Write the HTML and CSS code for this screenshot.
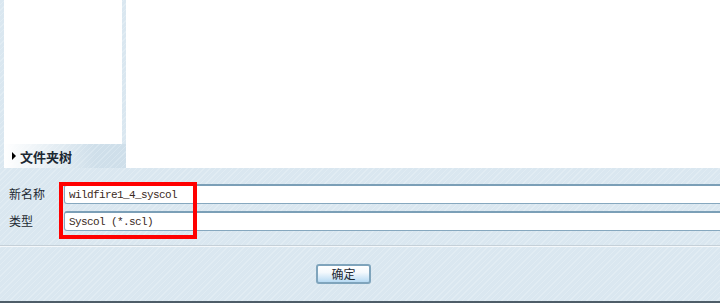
FILE: index.html
```html
<!DOCTYPE html>
<html lang="zh-CN">
<head>
    <meta charset="UTF-8">
    <meta name="viewport" content="width=device-width, initial-scale=1.0">
    <title>另存为</title>
    <link rel="stylesheet" href="styles.css">
</head>
<body>
    <div class="dialog">
        <div class="browse">
            <div class="tree-pane">
                <div class="tree-body"></div>
                <div class="tree-header">
                    <span class="arrow"></span>
                    <span class="tree-title">文件夹树</span>
                </div>
            </div>
            <div class="file-list"></div>
        </div>

        <div class="form">
            <div class="field">
                <label class="field-label" for="fileName">新名称</label>
                <input class="field-input" id="fileName" type="text" value="wildfire1_4_syscol">
            </div>
            <div class="field">
                <label class="field-label" for="fileType">类型</label>
                <input class="field-input" id="fileType" type="text" value="Syscol (*.scl)">
            </div>
            <div class="highlight"></div>
        </div>

        <div class="footer">
            <button class="ok-btn">确定</button>
        </div>
    </div>
</body>
</html>
```

FILE: styles.css
```css
/* Reset CSS */
* {
    margin: 0;
    padding: 0;
    box-sizing: border-box;
}

body {
    font-family: 'Noto Sans CJK SC', 'Liberation Sans', sans-serif;
    font-size: 12px;
    color: #1e2a33;
    background-color: #dae7f0;
    background-image: repeating-linear-gradient(135deg, #dae7f0 0, #dae7f0 3px, #e1ecf3 3px, #e1ecf3 4px);
    width: 720px;
    height: 303px;
    overflow: hidden;
}

.dialog {
    display: flex;
    flex-direction: column;
    height: 303px;
    border-bottom: 2px solid #4e5d68;
}

/* Browse area */
.browse {
    display: flex;
    height: 168px;
    padding-left: 4px;
}

.tree-pane {
    width: 122px;
    display: flex;
    flex-direction: column;
}

.tree-body {
    flex: 1;
    background: #fff;
    margin-right: 4px;
}

.tree-header {
    height: 24px;
    display: flex;
    align-items: center;
    padding-left: 8px;
    background-image:
        linear-gradient(90deg, rgba(255, 255, 255, 1) 0, rgba(255, 255, 255, 0.6) 30%, rgba(255, 255, 255, 0) 75%),
        repeating-linear-gradient(135deg, #cfdfea 0, #cfdfea 3px, #d8e6ef 3px, #d8e6ef 4px);
}

.arrow {
    width: 0;
    height: 0;
    border-top: 4px solid transparent;
    border-bottom: 4px solid transparent;
    border-left: 4px solid #000;
    margin-right: 4px;
}

.tree-title {
    font-size: 13px;
    font-weight: bold;
    color: #1b2833;
    line-height: 1;
}

.file-list {
    flex: 1;
    background: #fff;
}

/* Name / type form */
.form {
    position: relative;
    padding: 16px 0 14px 9px;
    display: flex;
    flex-direction: column;
    gap: 7px;
    border-bottom: 1px solid #c5d0d8;
    box-shadow: 0 1px 0 #f4f8fb;
}

.field {
    display: flex;
    align-items: center;
    height: 20px;
}

.field-label {
    width: 55px;
    line-height: 1;
}

.field-input {
    flex: 1;
    height: 20px;
    margin-right: -20px;
    border: 1px solid #86a8bf;
    border-top: 2px solid #7b9fb7;
    border-radius: 3px 0 0 3px;
    background: #fff;
    padding: 0 4px;
    font-family: 'Liberation Mono', monospace;
    font-size: 11px;
    letter-spacing: -0.6px;
    color: #3a2a22;
    outline: none;
}

.highlight {
    position: absolute;
    left: 59px;
    top: 14px;
    width: 138px;
    height: 57px;
    border: 4px solid #f00;
    pointer-events: none;
}

/* Footer */
.footer {
    flex: 1;
    padding: 18px 0 0 316px;
}

.ok-btn {
    width: 55px;
    height: 20px;
    border: 2px solid #7fa4bc;
    border-radius: 3px;
    background: linear-gradient(#ffffff 0, #f4f9fd 40%, #b7daf3 100%);
    font-family: 'Noto Sans CJK SC', sans-serif;
    font-size: 12px;
    color: #1e2a33;
    line-height: 1;
    cursor: pointer;
}
```
